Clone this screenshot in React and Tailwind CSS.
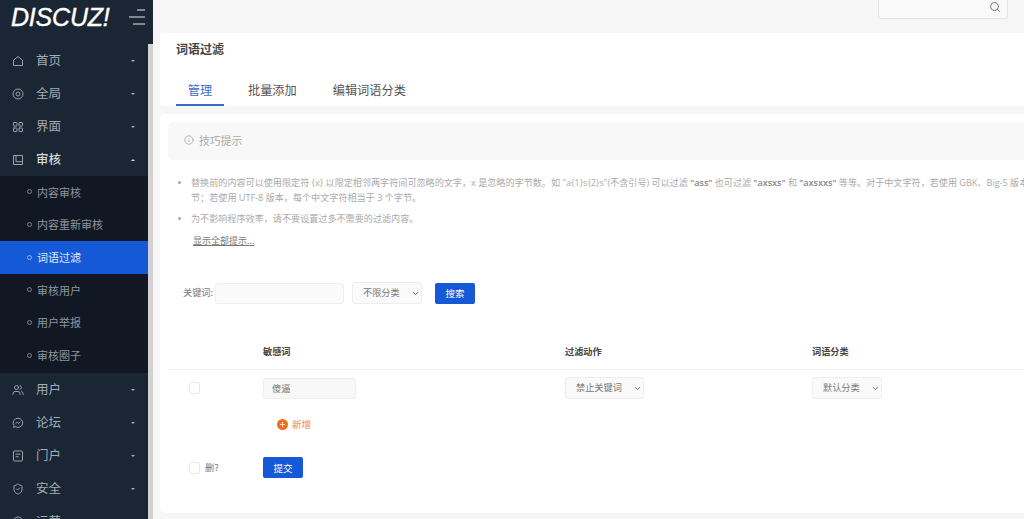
import { LayoutGrid, Users, ShieldCheck, Search, Info, Plus, ChevronDown } from 'lucide-react'

const CJK = 'font-["Noto_Sans_CJK_SC","Noto_Sans",sans-serif]'

// small outline icons the packages don't have in this shape
const Outline = ({ children }) => (
  <svg width="12" height="12" viewBox="0 0 12 12" fill="none" stroke="#9aa2aa" strokeWidth="1" strokeLinejoin="round">{children}</svg>
)
const HomeIcon = () => <Outline><path d="M1.5 5.2 6 1.5l4.5 3.7v5.3h-9z" /></Outline>
const TargetIcon = () => <Outline><circle cx="6" cy="6" r="5" /><circle cx="6" cy="6" r="2" /></Outline>
const BookIcon = () => <Outline><path d="M1.5 1.5h9v9h-9zM4 1.5v6.2h6.5" /></Outline>
const ChatIcon = () => <Outline><path d="M6 1.2a4.8 4.6 0 1 1-2.6 8.5L1.6 10.6l.5-2A4.8 4.6 0 0 1 6 1.2z" /><path d="M3.6 6.6 5 5.2l1.6 1.2 1.7-1.6" /></Outline>
const DocIcon = () => <Outline><rect x="1.5" y="1" width="9" height="10" rx="1" /><path d="M3.7 4.2h4.6M3.7 6.8h3" /></Outline>
const UsersIcon = () => <Users size={12} strokeWidth={2} className="text-[#9aa2aa]" />
const GridIcon = () => <LayoutGrid size={12} strokeWidth={2} className="text-[#9aa2aa]" />
const ShieldIcon = () => <ShieldCheck size={12} strokeWidth={2} className="text-[#9aa2aa]" />

const TOP_MENU = [
  { label: '首页', icon: HomeIcon },
  { label: '全局', icon: TargetIcon },
  { label: '界面', icon: GridIcon },
  { label: '审核', icon: BookIcon, open: true },
]
const SUB_MENU = ['内容审核', '内容重新审核', '词语过滤', '审核用户', '用户举报', '审核圈子']
const BOTTOM_MENU = [
  { label: '用户', icon: UsersIcon },
  { label: '论坛', icon: ChatIcon },
  { label: '门户', icon: DocIcon },
  { label: '安全', icon: ShieldIcon },
  { label: '运营', icon: TargetIcon },
]

function MenuItem({ item }) {
  const Icon = item.icon
  return (
    <div className={`h-[33px] shrink-0 flex items-center pl-[12px] pr-[13px] text-[12.5px] ${item.open ? 'text-[#d5d9dd] font-medium' : 'text-[#a5acb4]'}`}>
      <Icon />
      <span className="ml-[12px] flex-1">{item.label}</span>
      <span className={`w-0 h-0 border-x-[2px] border-x-transparent ${item.open ? 'border-b-[2px] border-b-[#d5d9dd]' : 'border-t-[2px] border-t-[#a5acb4]'}`} />
    </div>
  )
}

function Sidebar() {
  return (
    <aside className="w-[153px] shrink-0 h-full flex flex-col bg-[#1a2634]">
      <div className="h-[44px] shrink-0 flex items-center pl-[11px] pr-[7px] pb-[10px] justify-between">
        <span className='font-["Liberation_Sans",sans-serif] italic text-[25px] leading-none tracking-[-0.2px] text-white [-webkit-text-stroke:0.4px_white]'>DISCUZ!</span>
        <svg width="17" height="16" viewBox="0 0 17 16" stroke="#e6e9ec" strokeWidth="1.2" fill="none">
          <path d="M8 1h8M0 8h16M4 15h12" />
        </svg>
      </div>
      <div className="flex-1 flex min-h-0">
        <nav className="flex-1 min-w-0 overflow-hidden">
          {TOP_MENU.map(m => <MenuItem key={m.label} item={m} />)}
          <div className="bg-[#111824] pb-[1px]">
            {SUB_MENU.map(s => {
              const active = s === '词语过滤'
              return (
                <div key={s} className={`h-[32.7px] pb-[1px] flex items-center pl-[27px] text-[11px] ${active ? 'bg-[#1659d6] text-[#e3ebf8]' : 'text-[#8f959c]'}`}>
                  <span className={`w-[5px] h-[5px] rounded-full border ${active ? 'border-[#8fb0ea]' : 'border-[#7d838a]'}`} />
                  <span className="ml-[5px]">{s}</span>
                </div>
              )
            })}
          </div>
          {BOTTOM_MENU.map(m => <MenuItem key={m.label} item={m} />)}
        </nav>
        <div className="w-[5px] shrink-0 bg-[#d2d2d2]" />
      </div>
    </aside>
  )
}

function Select({ label, className }) {
  return (
    <span className={`relative inline-block h-[22px] ${className}`}>
      <select defaultValue={label} className="appearance-none w-full h-full pl-[10px] text-[9.2px] text-[#777] bg-[#fafafa] border border-[#eeeeee] rounded-[3px]">
        <option>{label}</option>
      </select>
      <ChevronDown size={9} strokeWidth={2.5} className="absolute right-[2px] top-[7px] text-[#666] pointer-events-none" />
    </span>
  )
}

function Checkbox() {
  return <span className="w-[11px] h-[12px] rounded-[2px] border border-[#e8e8e8] bg-white" />
}

function Button({ children }) {
  return <button className="w-[40px] h-[21px] rounded-[2px] bg-[#1659d6] text-white text-[9.5px]">{children}</button>
}

export default function App() {
  return (
    <div className={`w-[1024px] h-[519px] overflow-hidden flex bg-[#f6f6f6] ${CJK}`}>
      <Sidebar />
      <main className="flex-1 min-w-0 pl-[7px] flex flex-col">
        <div className="h-[33px] shrink-0 flex justify-end pr-[16px]">
          <div className="w-[130px] h-[19px] flex items-center justify-end pr-[6px] pb-[5px] bg-[#f9f9f9] border border-t-0 border-[#e4e4e4] rounded-b-[3px]">
            <Search size={12} strokeWidth={2} className="text-[#777]" />
          </div>
        </div>

        <section className="h-[73px] shrink-0 bg-white rounded-l-[3px] pl-[16px] flex flex-col">
          <h1 className="mt-[7px] text-[12px] leading-[17px] font-bold text-[#444]">词语过滤</h1>
          <div className="mt-[24px] flex text-[12.2px] leading-[18px] text-[#555]">
            <div className="w-[48px] h-[25px] text-center text-[#3a6bc9] border-b-2 border-[#3a6bc9]">管理</div>
            <div className="ml-[24px]">批量添加</div>
            <div className="ml-[36px]">编辑词语分类</div>
          </div>
        </section>

        <section className="mt-[8px] h-[399px] shrink-0 bg-white rounded-l-[5px] pl-[8px] pt-[8px] whitespace-nowrap overflow-hidden">
          <div className="h-[38px] flex items-center pl-[16px] pb-[2px] bg-[#f8f8f8] rounded-l-[5px] text-[#aaa] text-[10.8px]">
            <Info size={10} strokeWidth={2} />
            <span className="ml-[5px]">技巧提示</span>
          </div>

          <ul className='mt-[15px] pl-[10px] text-[9.1px] leading-[15px] text-[#aaa] font-["Open_Sans","Noto_Sans_CJK_SC",sans-serif]'>
            <li className="flex">
              <span className="w-[3px] h-[3px] shrink-0 mt-[6px] rounded-full bg-[#aaa]" />
              <span className="ml-[10px]">
                替换前的内容可以使用限定符 {'{x}'} 以限定相邻两字符间可忽略的文字，x 是忽略的字节数。如 "a{'{1}'}s{'{2}'}s"(不含引号) 可以过滤 <b className="text-[#888] font-semibold">"ass"</b> 也可过滤 <b className="text-[#888] font-semibold">"axsxs"</b> 和 <b className="text-[#888] font-semibold">"axsxxs"</b> 等等。对于中文字符，若使用 GBK、Big-5 版本，每个中文字符相当于 2 个字<br />
                节；若使用 UTF-8 版本，每个中文字符相当于 3 个字节。
              </span>
            </li>
            <li className="flex mt-[6px]">
              <span className="w-[3px] h-[3px] shrink-0 mt-[6px] rounded-full bg-[#aaa]" />
              <span className="ml-[10px]">为不影响程序效率，请不要设置过多不需要的过滤内容。</span>
            </li>
          </ul>
          <a className="block mt-[7px] ml-[25px] text-[9px] leading-[15px] text-[#777] underline">显示全部提示...</a>

          <div className="mt-[34px] ml-[15px] flex items-center text-[9.2px] text-[#777]">
            <span className="w-[32px]">关键词:</span>
            <input className="w-[129px] h-[21px] bg-[#fafafa] border border-[#eeeeee] rounded-[3px]" />
            <Select label="不限分类" className="ml-[8px] w-[70px]" />
            <span className="ml-[13px]"><Button>搜索</Button></span>
          </div>

          <div className="mt-[39px] h-[27px] grid grid-cols-[95px_302px_247px_1fr] items-start border-b border-[#f0f0f0] text-[9.2px] leading-[16px] font-bold text-[#444]">
            <span />
            <span>敏感词</span>
            <span>过滤动作</span>
            <span>词语分类</span>
          </div>

          <div className="mt-[7px] grid grid-cols-[95px_302px_247px_1fr] items-center text-[9.2px] text-[#777]">
            <span className="pl-[21px] flex"><Checkbox /></span>
            <input defaultValue="傻逼" className="w-[93px] h-[21px] pl-[8px] bg-[#f8f8f8] border border-[#eeeeee] rounded-[3px]" />
            <span className="flex"><Select label="禁止关键词" className="w-[79px]" /></span>
            <span className="flex"><Select label="默认分类" className="w-[70px]" /></span>
          </div>

          <div className="mt-[18px] ml-[109px] flex items-center text-[9.5px] text-[#f28a4c]">
            <span className="w-[11px] h-[11px] rounded-full bg-[#f36d1f] flex items-center justify-center">
              <Plus size={7} strokeWidth={3} className="text-white" />
            </span>
            <span className="ml-[4px]">新增</span>
          </div>

          <div className="mt-[26px] flex items-center text-[9.2px] text-[#777]">
            <span className="pl-[21px] w-[95px] flex items-center">
              <Checkbox />
              <span className="ml-[5px]">删?</span>
            </span>
            <Button>提交</Button>
          </div>
        </section>
      </main>
    </div>
  )
}
